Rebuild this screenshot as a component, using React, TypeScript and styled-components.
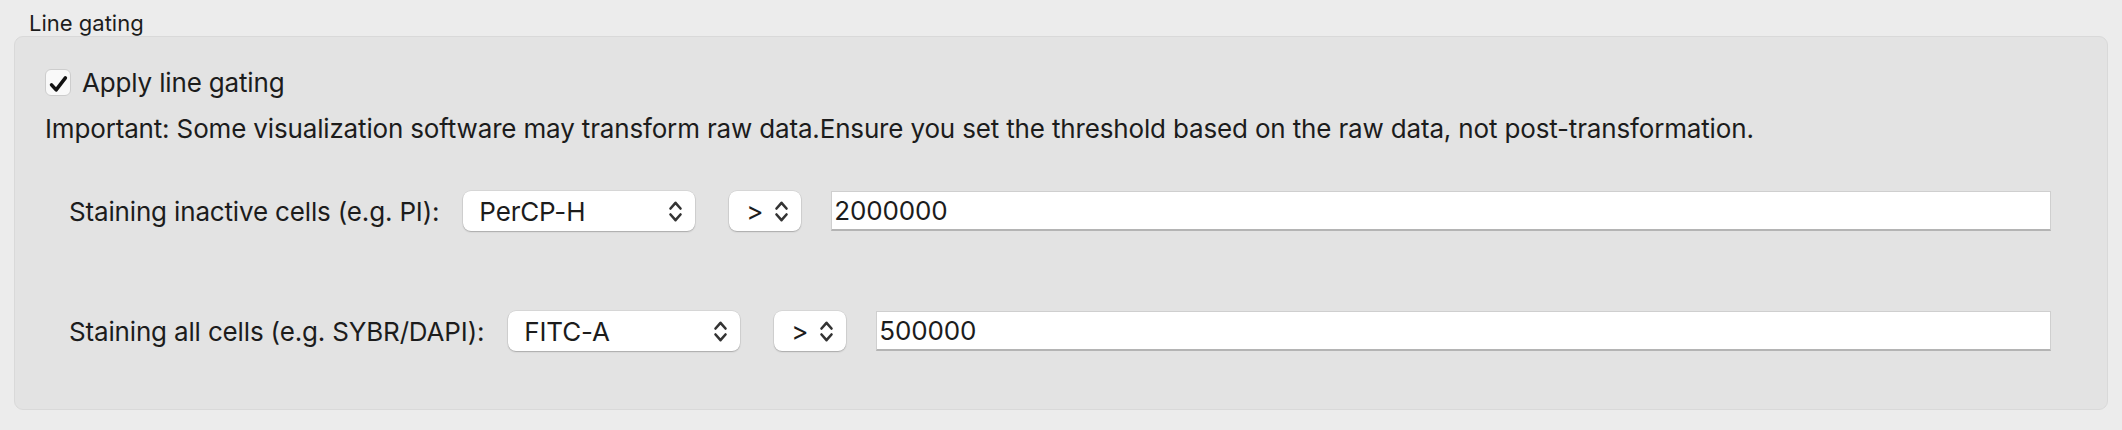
import React from "react";
import styled, { createGlobalStyle } from "styled-components";

const GlobalStyle = createGlobalStyle`
  body {
    margin: 0;
    background: #ececec;
    font-family: Inter, "Liberation Sans", sans-serif;
    color: #1c1c1c;
  }
`;

const Page = styled.div`
  width: 2122px;
  height: 430px;
  box-sizing: border-box;
  padding: 0 14px;
`;

const Title = styled.div`
  padding: 10px 0 0 15px;
  height: 26px;
  font-size: 22px;
  line-height: 26px;
`;

const GroupBox = styled.div`
  border: 1px solid #d9d9d9;
  border-radius: 9px;
  background: #e3e3e3;
  padding: 30px 30px 58px 30px;
  font-size: 26px;
  letter-spacing: -0.16px;
`;

const CheckRow = styled.label`
  display: flex;
  align-items: center;
  gap: 11px;
  height: 30px;
`;

const CheckBox = styled.span`
  width: 26px;
  height: 27px;
  box-sizing: border-box;
  border: 1px solid #cdcdcd;
  border-radius: 6px;
  background: #f9f9f9;
  display: flex;
  align-items: center;
  justify-content: center;
`;

const Note = styled.div`
  margin-top: 16px;
  line-height: 32px;
`;

const FieldRow = styled.div<{ $gap: number }>`
  display: flex;
  align-items: center;
  height: 40px;
  margin-top: ${({ $gap }) => $gap}px;
  padding: 0 26px 0 24px;
`;

const FieldLabel = styled.span`
  margin-right: 24px;
  white-space: nowrap;
`;

const Combo = styled.div<{ $width: number; $padLeft: number }>`
  width: ${({ $width }) => $width}px;
  height: 40px;
  box-sizing: border-box;
  padding: 0 12px 0 ${({ $padLeft }) => $padLeft}px;
  margin-right: ${({ $width }) => ($width > 100 ? 34 : 30)}px;
  display: flex;
  align-items: center;
  justify-content: space-between;
  background: #ffffff;
  border-radius: 8px;
  box-shadow: 0 0 0 0.5px rgba(0, 0, 0, 0.1), 0 1px 1.5px rgba(0, 0, 0, 0.22);
  flex-shrink: 0;
`;

const LineEdit = styled.div`
  flex: 1;
  height: 40px;
  box-sizing: border-box;
  padding-left: 2px;
  display: flex;
  align-items: center;
  background: #ffffff;
  border: 1px solid #cfcfcf;
  border-bottom: 2px solid #b4b4b4;
`;

const Chevrons = () => (
  <svg width="15" height="23" viewBox="0 0 15 23" fill="none">
    <path
      d="M2.5 8.5 L7.5 2.8 L12.5 8.5 M2.5 14.5 L7.5 20.2 L12.5 14.5"
      stroke="#333"
      strokeWidth="2.6"
      strokeLinecap="round"
      strokeLinejoin="round"
    />
  </svg>
);

const CheckMark = () => (
  <svg width="26" height="27" viewBox="0 0 26 27" fill="none">
    <path
      d="M6 16 L11 21.5 L21 8.5"
      stroke="#111"
      strokeWidth="3.8"
      strokeLinecap="round"
      strokeLinejoin="round"
    />
  </svg>
);

const fields = [
  { label: "Staining inactive cells (e.g. PI):", channel: "PerCP-H", value: "2000000", gap: 46 },
  { label: "Staining all cells (e.g. SYBR/DAPI):", channel: "FITC-A", value: "500000", gap: 80 },
];

export default function App() {
  return (
    <Page>
      <GlobalStyle />
      <Title>Line gating</Title>
      <GroupBox>
        <CheckRow>
          <CheckBox>
            <CheckMark />
          </CheckBox>
          Apply line gating
        </CheckRow>
        <Note>
          Important: Some visualization software may transform raw data.Ensure you set the threshold
          based on the raw data, not post-transformation.
        </Note>
        {fields.map((f) => (
          <FieldRow key={f.label} $gap={f.gap}>
            <FieldLabel>{f.label}</FieldLabel>
            <Combo $width={232} $padLeft={16}>
              <span>{f.channel}</span>
              <Chevrons />
            </Combo>
            <Combo $width={72} $padLeft={17}>
              <span>&gt;</span>
              <Chevrons />
            </Combo>
            <LineEdit>{f.value}</LineEdit>
          </FieldRow>
        ))}
      </GroupBox>
    </Page>
  );
}
